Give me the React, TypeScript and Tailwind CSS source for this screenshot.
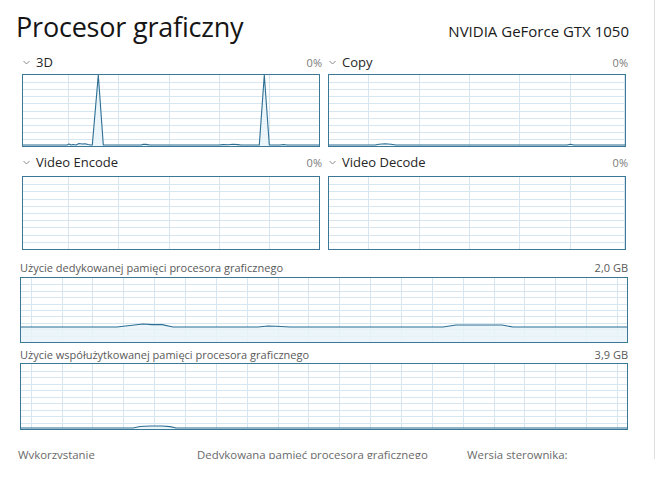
import React from "react";

type Pt = [number, number];

const GRID = "#d6e7f1";
const LINE = "#2c6f93";
const FILL = "#e8f3f9";

function Chart({
  left,
  top,
  w,
  h,
  vlines,
  pts,
  className,
}: {
  left: number;
  top: number;
  w: number;
  h: number;
  vlines: number[];
  pts?: Pt[];
  className?: string;
}) {
  const iw = w - 2;
  const ih = h - 2;
  const ox = left + 1;
  const oy = top + 1;
  const hl: number[] = [];
  for (let k = 1; k < 10; k++) hl.push(Math.round((k * ih) / 10) + 0.5);
  const rel = (pts || []).map(([x, y]) => [x - ox, y - oy] as Pt);
  const lineD = rel.length
    ? "M" + rel.map(([x, y]) => `${x.toFixed(1)} ${y.toFixed(1)}`).join(" L")
    : "";
  const fillD = rel.length
    ? lineD + ` L${rel[rel.length - 1][0]} ${ih + 2} L${rel[0][0]} ${ih + 2} Z`
    : "";
  return (
    <div className={"border border-[#3b7896] bg-white " + (className || "")}>
      <svg width={iw} height={ih} viewBox={`0 0 ${iw} ${ih}`} className="block">
        <g shapeRendering="crispEdges" stroke={GRID} strokeWidth={1}>
          {hl.map((y) => (
            <line key={"h" + y} x1={0} x2={iw} y1={y} y2={y} />
          ))}
          {vlines.map((x) => (
            <line
              key={"v" + x}
              x1={Math.round(x - ox) + 0.5}
              x2={Math.round(x - ox) + 0.5}
              y1={0}
              y2={ih}
            />
          ))}
        </g>
        {rel.length > 0 && (
          <>
            <path d={fillD} fill={FILL} fillOpacity={0.85} stroke="none" />
            <path d={lineD} fill="none" stroke={LINE} strokeWidth={1.1} strokeLinejoin="round" />
          </>
        )}
      </svg>
    </div>
  );
}

function Chevron() {
  return (
    <svg width="7" height="5" viewBox="0 0 7 5" className="mr-[6px]">
      <path d="M0.5 1 L3.5 4 L6.5 1" fill="none" stroke="#8a8a8a" strokeWidth="1" />
    </svg>
  );
}

function Label({ name, pct }: { name: string; pct: string }) {
  return (
    <div className="h-[20px] flex items-center pl-[3px]">
      <Chevron />
      <span className="text-[13px] text-[#262626] leading-none">{name}</span>
      <span className="ml-auto text-[11px] text-[#7a7a7a] leading-none">{pct}</span>
    </div>
  );
}

const b1 = 145;
const threeD: Pt[] = [
  [23, b1], [67, b1], [69, 144], [71, 145], [73, 144.5], [76, 145], [79, 143.5], [82, 144], [85, 143.8], [88, 144.5], [91, b1],
  [92.3, b1], [98.3, 75], [103.3, b1],
  [141, b1], [143.5, 144.2], [146, 144.4], [150, b1],
  [219, b1], [223, 144.6], [228, 144.8], [233, 144.2], [238, 144.6], [241, b1],
  [259.3, b1], [264.3, 75], [269.3, b1],
  [280, b1], [283.5, 144.5], [287, b1], [319, b1],
];
const copy: Pt[] = [
  [329, b1], [375, b1], [379, 144.3], [385, 143.8], [391, 144.2], [396, b1],
  [567, b1], [570.5, 144.2], [574, b1], [625, b1],
];
const dedicated: Pt[] = [
  [21, 327], [117, 327], [130, 325.5], [143, 324], [152, 324.6], [162, 324.6], [173, 327],
  [258, 327], [268, 326], [276, 326.3], [290, 327],
  [443, 327], [456, 325], [502, 325], [513, 327], [627, 327],
];
const shared: Pt[] = [
  [21, 428], [133, 428], [140, 426.5], [150, 426], [162, 426], [170, 426.6], [176, 428], [627, 428],
];

const vTop1 = [67.7, 118, 168.5, 218.7, 269.2, 319];
const vTop2 = [368.3, 419, 469.3, 519.3, 570, 623.7];
const vMem: number[] = [];
for (let i = 0; i < 20; i++) vMem.push(30.7 + i * 30.86);

export default function App() {
  return (
    <div
      className="w-[656px] h-[493px] bg-white overflow-hidden"
      style={{ fontFamily: '"Open Sans", "Noto Sans", sans-serif' }}
    >
      <div className="w-[655px] h-[459px] border-r border-[#dedede] overflow-hidden">
        <div className="flex items-baseline justify-between pl-[16px] pr-[25px] pt-[9px]">
          <div className="text-[27px] leading-[36px] text-[#151515] tracking-[-0.2px]">Procesor graficzny</div>
          <div className="text-[15px] leading-[20px] text-[#1a1a1a]">NVIDIA GeForce GTX 1050</div>
        </div>

        <div className="ml-[20px] w-[608px] mt-[7px] grid grid-cols-2 gap-x-[4px]">
          <div>
            <Label name="3D" pct="0%" />
            <Chart left={22} top={74} w={298} h={73} vlines={vTop1} pts={threeD} className="mx-[2px] mt-[2px] w-[298px] h-[73px]" />
          </div>
          <div>
            <Label name="Copy" pct="0%" />
            <Chart left={328} top={74} w={298} h={73} vlines={vTop2} pts={copy} className="mx-[2px] mt-[2px] w-[298px] h-[73px]" />
          </div>
          <div className="mt-[5px]">
            <Label name="Video Encode" pct="0%" />
            <Chart left={22} top={176} w={298} h={74} vlines={vTop1} className="mx-[2px] mt-[4px] w-[298px] h-[74px]" />
          </div>
          <div className="mt-[5px]">
            <Label name="Video Decode" pct="0%" />
            <Chart left={328} top={176} w={298} h={74} vlines={vTop2} className="mx-[2px] mt-[4px] w-[298px] h-[74px]" />
          </div>
        </div>

        <div className="ml-[20px] w-[608px]">
          <div className="mt-[9px] h-[16px] flex items-center justify-between text-[11px] text-[#5a5a5a] leading-none">
            <span>Użycie dedykowanej pamięci procesora graficznego</span>
            <span>2,0 GB</span>
          </div>
          <Chart left={20} top={277} w={608} h={66} vlines={vMem} pts={dedicated} className="mt-[2px] w-[608px] h-[66px]" />
          <div className="mt-[3px] h-[16px] flex items-center justify-between text-[11px] text-[#5a5a5a] leading-none">
            <span>Użycie współużytkowanej pamięci procesora graficznego</span>
            <span>3,9 GB</span>
          </div>
          <Chart left={20} top={363} w={608} h={67} vlines={vMem} pts={shared} className="mt-[1px] w-[608px] h-[67px]" />
        </div>

        <div className="mt-[17px] h-[16px] flex items-center pl-[18px] text-[11.4px] text-[#6a6a6a] leading-none">
          <span className="w-[179px]">Wykorzystanie</span>
          <span className="w-[270px]">Dedykowana pamięć procesora graficznego</span>
          <span>Wersja sterownika:</span>
        </div>
      </div>
    </div>
  );
}
